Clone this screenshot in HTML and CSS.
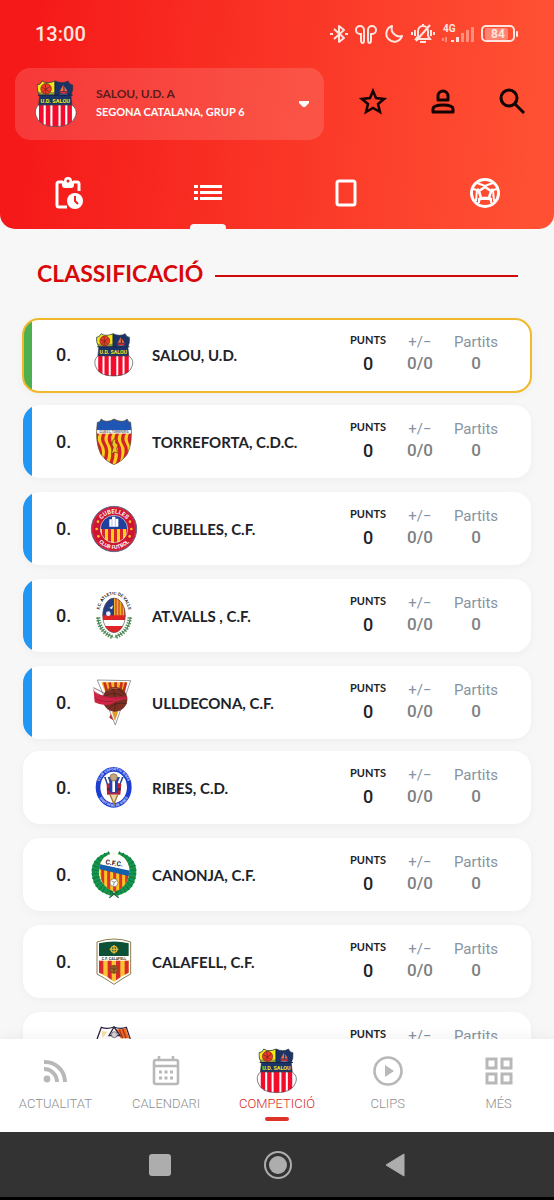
FILE: index.html
```html
<!DOCTYPE html>
<html lang="ca">
<head>
<meta charset="utf-8">
<meta name="viewport" content="width=device-width, initial-scale=1">
<title>Classificació</title>
<link rel="stylesheet" href="styles.css">
</head>
<body>
<svg class="defs" aria-hidden="true">
  <defs>
    <pattern id="stripes" width="18" height="10" patternUnits="userSpaceOnUse"><rect width="18" height="10" fill="#fcd116"/><rect width="9" height="10" fill="#d8232a"/></pattern>
    <clipPath id="salou-top"><path d="M24 20Q33 20 38 9Q52 19 74 9Q96 19 111 9Q115 20 124 20Q126 36 119 50L122 78H28L31 50Q22 36 24 20Z"/></clipPath>
    <clipPath id="salou-low"><path d="M28 76H122Q138 88 133 106Q124 138 76 138Q28 138 20 106Q15 88 28 76Z"/></clipPath>
    <clipPath id="torre"><path d="M22 13Q29 14 34 3Q40 10 50 10Q62 10 72 3Q84 10 96 10Q106 10 111 3Q116 14 122 13Q130 70 112 108Q98 130 72 140Q46 130 32 108Q14 70 22 13Z"/></clipPath>
    <clipPath id="valls"><ellipse cx="72" cy="70" rx="34" ry="52"/></clipPath>
    <clipPath id="canonja"><path d="M28 48Q36 12 72 7Q108 12 118 50Q120 108 72 122Q26 106 28 48Z"/></clipPath>
    <symbol id="salou" viewBox="12 4 130 140">
      <g clip-path="url(#salou-top)"><rect x="18" y="4" width="112" height="76" fill="#1b3468"/><rect x="18" y="4" width="56" height="44" fill="#f4e71b"/><path d="M18 40H74V48H18Z" fill="#9a9e32"/></g>
      <circle cx="49" cy="31" r="15" fill="#ec3b2b" stroke="#6d2217" stroke-width="2"/><path d="M37 27L49 32L60 24M49 32L47 45M40 39L49 32L57 40M46 17L49 32" stroke="#6d2217" stroke-width="2" fill="none"/>
      <path d="M98 19V37H88ZM101 24L109 37H101Z" fill="#ee6d3a"/><path d="M86 39H112L105 45H92Z" fill="#d42b2b"/><path d="M86 48Q98 44 111 48" stroke="#77a9d8" stroke-width="2" fill="none"/>
      <path d="M74 10V48M26 49H124" stroke="#172248" stroke-width="3"/>
      <path d="M24 20Q33 20 38 9Q52 19 74 9Q96 19 111 9Q115 20 124 20Q126 36 119 50L122 78H28L31 50Q22 36 24 20Z" fill="none" stroke="#27313a" stroke-width="2"/>
      <text x="75" y="70" text-anchor="middle" class="crest-bold" font-size="16" fill="#f4e71b">U.D. SALOU</text>
      <g clip-path="url(#salou-low)"><rect x="16" y="76" width="120" height="64" fill="#fff"/><path d="M29 76H42V140H29ZM48 76H61V140H48ZM67 76H84V140H67ZM90 76H103V140H90ZM109 76H122V140H109Z" fill="#f40b2c"/></g>
      <path d="M28 77H122Q138 88 133 106Q124 138 76 138Q28 138 20 106Q15 88 28 77Z" fill="none" stroke="#47434a" stroke-width="2"/>
    </symbol>
    <symbol id="crest-torreforta" viewBox="0 0 144 144">
      <g clip-path="url(#torre)"><rect width="144" height="144" fill="#f6d01c"/><path d="M24 44Q12 62 24 80T28 122M44 44Q32 62 44 80T44 130M64 44Q52 62 64 80T62 140M84 44Q72 62 84 80T82 140M104 44Q92 62 104 80T98 140M124 44Q112 62 124 80T116 130" fill="none" stroke="#d3202a" stroke-width="10"/><rect width="144" height="38" fill="#1f56b4"/><rect y="36" width="144" height="11" fill="#f4f4f4"/></g>
      <text x="72" y="45" text-anchor="middle" class="crest-bold" font-size="8" fill="#667">CLUB D.C. TORREFORTA</text>
      <path d="M69 66L78 62L76 74L84 80L80 92L84 106L74 102L64 108L70 88L66 80Z" fill="#f2c41c" stroke="#5b3a1c" stroke-width="2"/>
      <path d="M22 13Q29 14 34 3Q40 10 50 10Q62 10 72 3Q84 10 96 10Q106 10 111 3Q116 14 122 13Q130 70 112 108Q98 130 72 140Q46 130 32 108Q14 70 22 13Z" fill="none" stroke="#5c4a3a" stroke-width="2"/>
    </symbol>
    <symbol id="crest-cubelles" viewBox="0 0 144 144">
      <path id="cub-up" d="M25 72A47 47 0 0 1 119 72" fill="none"/><path id="cub-down" d="M12 72A60 60 0 0 0 132 72" fill="none"/>
      <circle cx="72" cy="72" r="68" fill="#cf1431" stroke="#60708f" stroke-width="3"/><circle cx="72" cy="72" r="64" fill="none" stroke="#e85a66" stroke-width="1"/>
      <circle cx="72" cy="72" r="41" fill="#1f409c"/><path d="M31 72A41 41 0 0 0 113 72Z" fill="url(#stripes)"/><circle cx="72" cy="72" r="41" fill="none" stroke="#f4e7df" stroke-width="2"/>
      <path d="M58 65V43H66V35H76V41H85V65Z" fill="#fff"/><path d="M66 43V65M76 41V65" stroke="#91a5d6" stroke-width="2"/>
      <g fill="#f7c623"><circle cx="24" cy="50" r="4"/><circle cx="20" cy="72" r="4"/><circle cx="25" cy="94" r="4"/><circle cx="120" cy="50" r="4"/><circle cx="124" cy="72" r="4"/><circle cx="119" cy="94" r="4"/></g>
      <g class="crest-bold" fill="#fff" text-anchor="middle"><text font-size="18"><textPath href="#cub-up" startOffset="50%">CUBELLES</textPath></text><text font-size="16"><textPath href="#cub-down" startOffset="50%">CLUB FUTBOL</textPath></text></g>
    </symbol>
    <symbol id="crest-valls" viewBox="0 0 144 144">
      <path id="valls-arc" d="M28 60C36 -10 108 -10 116 60" fill="none"/>
      <text class="crest-bold" font-size="13" fill="#222" text-anchor="middle"><textPath href="#valls-arc" startOffset="50%">F.C. ATLETIC DE VALLS</textPath></text>
      <g clip-path="url(#valls)"><rect width="144" height="144" fill="#fff"/><path d="M36 16H72V72H36Z" fill="#263d84"/><path d="M72 16H108V72H72Z" fill="#f0ae2b"/><path d="M78 16V72M87 16V72M96 16V72M104 16V72" stroke="#c94b27" stroke-width="4"/><path d="M36 70H108V84H36ZM36 102H108V124H36Z" fill="#df2426"/><path d="M48 65A7 7 0 1 1 62 65A7 7 0 1 1 48 65M58 48L70 40L66 52Z" fill="#e8eef8"/></g>
      <ellipse cx="72" cy="70" rx="34" ry="52" fill="none" stroke="#5b4e54" stroke-width="2"/>
      <path d="M23 76Q24 118 70 136M121 76Q120 118 74 136" fill="none" stroke="#397344" stroke-width="3"/><path d="M25 76Q26 116 68 136M119 76Q118 116 76 136" fill="none" stroke="#4d8b57" stroke-width="13" stroke-dasharray="4 4"/>
    </symbol>
    <symbol id="crest-ulldecona" viewBox="0 0 144 144">
      <path d="M22 3L122 5L76 138Z" fill="#fff" stroke="#666" stroke-width="2"/><path d="M34 10H110L76 118Z" fill="#f3b52b"/><path d="M43 10L55 50M59 10L65 50M77 10V50M95 10L88 50M108 10L98 50" stroke="#c82d24" stroke-width="8"/>
      <circle cx="75" cy="61" r="37" fill="#7c3024"/><path d="M43 44Q75 12 106 48M40 54Q75 28 111 62M53 91Q75 67 110 74M65 25Q83 52 73 97" fill="none" stroke="#4a1a15" stroke-width="2"/><path d="M51 36Q65 24 84 29" stroke="#ad563b" stroke-width="3" fill="none"/>
      <path d="M10 26L14 40Q40 60 110 52L112 60Q84 62 62 76Q36 82 14 70Z" fill="#cf2445"/><path d="M13 38Q48 64 110 55M14 58Q42 72 70 66" fill="none" stroke="#911b33" stroke-width="2"/><path d="M10 26L42 42" stroke="#5b3434" stroke-width="2"/>
      <path d="M66 100L84 100L75 126Z" fill="#e29929"/><path d="M62 105L58 116L70 124" fill="#b8273a"/>
    </symbol>
    <symbol id="crest-ribes" viewBox="0 0 144 144">
      <path id="rib-up" d="M26 70A45 51 0 0 1 116 70" fill="none"/><path id="rib-down" d="M20 70A51 58 0 0 0 122 70" fill="none"/>
      <ellipse cx="71" cy="70" rx="47" ry="54" fill="#fff" stroke="#1c3dce" stroke-width="14"/>
      <g class="crest-bold" font-size="11" fill="#cbd6ff" text-anchor="middle"><text><textPath href="#rib-up" startOffset="50%">CLUB ESPORTIU RIBES</textPath></text><text><textPath href="#rib-down" startOffset="50%">SANT PERE DE RIBES</textPath></text></g>
      <path d="M42 39H101L90 66H52Z" fill="#27408e"/><path d="M50 39L58 62M93 39L84 62" stroke="#fff" stroke-width="6"/><path d="M50 60L62 56H82L94 60L91 92H51Z" fill="#b42335"/><path d="M59 42H83V86H59Z" fill="#263fb0"/><path d="M71 45V84" stroke="#fff" stroke-width="8"/><circle cx="71" cy="40" r="11" fill="#c5a77e" stroke="#725c48" stroke-width="2"/><path d="M60 92L72 120L83 92" fill="#e9d9aa" stroke="#a17a31" stroke-width="4"/><path d="M52 76H60M83 76H92" stroke="#37284a" stroke-width="6"/>
    </symbol>
    <symbol id="crest-canonja" viewBox="0 0 144 144">
      <path d="M60 12Q6 28 18 80Q26 116 70 124M84 12Q138 28 126 80Q118 116 74 124" fill="none" stroke="#15964f" stroke-width="21"/><path d="M60 12Q6 28 18 80Q26 116 70 124M84 12Q138 28 126 80Q118 116 74 124" fill="none" stroke="#0f7a40" stroke-width="23" stroke-dasharray="3 8"/>
      <path d="M86 118L58 140M58 118L86 140" stroke="#24623b" stroke-width="4"/>
      <g clip-path="url(#canonja)"><rect width="144" height="144" fill="#f9c522"/><path d="M38 40V130M56 40V130M74 40V130M92 40V130M110 40V130" stroke="#d93430" stroke-width="9"/><path d="M0 0H144V66L28 40Z" fill="#fff"/><path d="M22 38L122 60V77L22 53Z" fill="#1460ad"/></g>
      <text x="72" y="43" text-anchor="middle" class="crest-bold" font-size="20" fill="#111" transform="rotate(9 72 40)">C.F.C.</text>
      <circle cx="72" cy="95" r="12" fill="#fff" stroke="#765" stroke-width="2"/><path d="M65 90L73 94L80 89M73 94L70 104" fill="none" stroke="#555" stroke-width="2"/>
    </symbol>
    <symbol id="crest-calafell" viewBox="0 0 144 144">
      <path d="M21 12Q46 3 72 3Q98 3 122 12V108Q102 118 72 139Q40 118 21 108Z" fill="#fff" stroke="#8b7b4d" stroke-width="3"/><path d="M27 16Q72 5 116 16V54H27Z" fill="#0c5135"/>
      <path d="M27 68H116V104Q94 114 72 131Q50 114 27 104Z" fill="#f8c52e"/><path d="M27 68H40V109L27 104ZM53 68H65V126L53 117ZM78 68H91V118L78 127ZM104 68H116V104L104 110Z" fill="#d9282e"/>
      <circle cx="72" cy="34" r="9" fill="none" stroke="#e0b83c" stroke-width="4"/><path d="M72 21V47M59 34H85" stroke="#e0b83c" stroke-width="4"/><circle cx="72" cy="94" r="12" fill="#9c6422" stroke="#6b431a" stroke-width="2"/><path d="M62 90Q72 98 82 90M72 82V106" fill="none" stroke="#5c3a18" stroke-width="2"/>
      <text x="72" y="65" text-anchor="middle" class="crest-bold" font-size="11" fill="#2c3b33">C.F. CALAFELL</text>
    </symbol>
    <symbol id="crest-next" viewBox="0 0 144 144">
      <path d="M22 40L34 7Q52 14 72 6Q90 14 109 7L120 40V90Q98 128 72 138Q46 128 22 90Z" fill="#fff" stroke="#2f2540" stroke-width="4"/><path d="M76 12Q92 14 107 9L118 40H92Z" fill="#f36b24"/><path d="M88 14L98 40M98 13L108 40" stroke="#a7351f" stroke-width="4"/><path d="M72 6L57 32H90Z" fill="#fff" stroke="#2f2540" stroke-width="4"/><path d="M35 18L52 20L38 38Z" fill="#f6dda1"/><circle cx="73" cy="29" r="9" fill="#d5d2d8" stroke="#50405b" stroke-width="2"/>
    </symbol>
  </defs>
</svg>

<div class="app">
  <header class="top">
    <div class="status">
      <time class="clock">13:00</time>
      <div class="status-icons">
        <svg width="18" height="20" viewBox="0 0 18 20" fill="none" stroke="currentColor" stroke-width="2" stroke-linejoin="round" aria-hidden="true"><path d="M4 5L14 14L9 18V2L14 6L4 15"/><path d="M0 10H3M15 10H18"/></svg>
        <svg width="22" height="20" viewBox="0 0 22 20" fill="none" stroke="currentColor" stroke-width="2" aria-hidden="true"><path d="M6 10H5A4 4 0 1 1 9 6V16A1 2 0 0 1 6 16ZM16 10H17A4 4 0 1 0 13 6V16A1 2 0 0 0 16 16Z"/></svg>
        <svg width="20" height="20" viewBox="0 0 20 20" fill="none" stroke="currentColor" stroke-width="2" stroke-linejoin="round" aria-hidden="true"><path d="M8 2A8 8 0 1 0 18 12A8 8 0 0 1 8 2Z"/></svg>
        <svg width="24" height="20" viewBox="0 0 24 20" fill="none" stroke="currentColor" stroke-width="2" aria-hidden="true"><path d="M5 15H19L17 12V7A5 5 0 0 0 7 7V12ZM12 0V3M9 18H15M19 1L5 17M1 8V11M4 6V12M20 6V12M23 8V11"/></svg>
        <svg width="32" height="20" viewBox="0 0 32 20" fill="currentColor" aria-hidden="true"><text x="1" y="8" class="crest-bold" font-size="10">4G</text><path d="M9 16H12V18H9ZM14 13H17V18H14Z"/><path opacity=".45" d="M19 9H22V18H19ZM24 6H27V18H24ZM29 3H32V18H29ZM0 14H2V17H0ZM3 13H5V18H3Z"/></svg>
        <svg width="38" height="18" viewBox="0 0 38 18" aria-hidden="true"><rect x="4" y="3" width="23" height="12" rx="2" fill="#ff8472"/><rect x="1" y="1" width="32" height="15" rx="4" fill="none" stroke="currentColor" stroke-width="2"/><rect x="35" y="6" width="2" height="6" rx="1" fill="currentColor"/><text x="17" y="13" text-anchor="middle" class="crest-bold" font-size="12" fill="currentColor">84</text></svg>
      </div>
    </div>
    <div class="toolbar">
      <button class="team-picker" type="button">
        <svg class="crest-lg" aria-hidden="true"><use href="#salou"/></svg>
        <span class="team-text"><span class="team-name">SALOU, U.D. A</span><span class="team-group">SEGONA CATALANA, GRUP 6</span></span>
        <svg width="12" height="8" viewBox="0 0 12 8" fill="#fff" aria-hidden="true"><path d="M1 1H11L11 3L7 7H5L1 3Z"/></svg>
      </button>
      <div class="actions">
        <button type="button" aria-label="Preferits"><svg width="28" height="28" viewBox="0 0 28 28" fill="none" stroke="#130303" stroke-width="2.500" aria-hidden="true"><path d="M14 4L17 11L25 12L19 17L21 25L14 21L7 25L9 17L3 12L11 11Z"/></svg></button>
        <button type="button" aria-label="Perfil"><svg width="28" height="28" viewBox="0 0 28 28" fill="none" stroke="#130303" stroke-width="3" stroke-linejoin="round" aria-hidden="true"><path d="M9 13V9A5 5 0 0 1 19 9V13Z"/><path d="M4 25V22Q4 18 14 18T24 22V25Z"/></svg></button>
        <button type="button" aria-label="Cerca"><svg width="28" height="28" viewBox="0 0 28 28" fill="none" stroke="#130303" stroke-width="3" aria-hidden="true"><circle cx="11" cy="11" r="8"/><path d="M16 16L26 26"/></svg></button>
      </div>
    </div>
    <nav class="tabs" aria-label="Seccions">
      <a href="#partits" aria-label="Partits"><svg width="30" height="34" viewBox="0 0 30 34" aria-hidden="true"><path d="M9 6H5Q3 6 3 8V29Q3 31 5 31H13M19 6H23Q25 6 25 8V15" fill="none" stroke="#fff" stroke-width="3"/><path d="M8 5H10A4 4 0 0 1 18 5H20V9Q20 12 17 12H11Q8 12 8 9Z" fill="#fff"/><circle cx="14" cy="5" r="1.500" fill="#f52020"/><circle cx="21" cy="25" r="8" fill="#fff"/><path d="M21 20V25L24 28" fill="none" stroke="#f52020" stroke-width="2"/></svg></a>
      <a href="#classificacio" class="active" aria-label="Classificació"><svg width="28" height="18" viewBox="0 0 28 18" fill="#fff" aria-hidden="true"><path d="M0 1H4V4H0ZM6 1H28V4H6ZM0 7H4V10H0ZM6 7H28V10H6ZM0 13H4V16H0ZM6 13H28V16H6Z"/></svg></a>
      <a href="#targetes" aria-label="Targetes"><svg width="22" height="28" viewBox="0 0 22 28" fill="none" stroke="#fff" stroke-width="3" aria-hidden="true"><rect x="2" y="2" width="18" height="24" rx="2"/></svg></a>
      <a href="#gols" aria-label="Gols"><svg width="32" height="32" viewBox="0 0 32 32" fill="none" stroke="#fff" aria-hidden="true"><circle cx="16" cy="16" r="13.500" stroke-width="3"/><path d="M16 10L22 14L20 21H12L10 14Z" stroke-width="2.600"/><path d="M16 8V10M24 12L22 14M22 23L20 21M10 23L12 21M8 12L10 14" stroke-width="3"/><path d="M8 6L16 9L24 6M28 12L24 13L25 24M4 12L8 13L7 24M10 26V22H22V26" stroke-width="2"/></svg></a>
    </nav>
  </header>

  <main class="content">
    <h1 class="title">CLASSIFICACIÓ</h1>
    <div class="groups">
      <ol class="group">
        <li class="row leader"><span class="pos">0.</span><svg class="crest crest-salou" aria-hidden="true"><use href="#salou"/></svg><span class="name">SALOU, U.D.</span><dl class="stats"><div class="points"><dt>PUNTS</dt><dd>0</dd></div><div><dt>+/−</dt><dd>0/0</dd></div><div><dt>Partits</dt><dd>0</dd></div></dl></li>
      </ol>
      <ol class="group promotion">
        <li class="row"><span class="pos">0.</span><svg class="crest" aria-hidden="true"><use href="#crest-torreforta"/></svg><span class="name">TORREFORTA, C.D.C.</span><dl class="stats"><div class="points"><dt>PUNTS</dt><dd>0</dd></div><div><dt>+/−</dt><dd>0/0</dd></div><div><dt>Partits</dt><dd>0</dd></div></dl></li>
        <li class="row"><span class="pos">0.</span><svg class="crest" aria-hidden="true"><use href="#crest-cubelles"/></svg><span class="name">CUBELLES, C.F.</span><dl class="stats"><div class="points"><dt>PUNTS</dt><dd>0</dd></div><div><dt>+/−</dt><dd>0/0</dd></div><div><dt>Partits</dt><dd>0</dd></div></dl></li>
        <li class="row"><span class="pos">0.</span><svg class="crest" aria-hidden="true"><use href="#crest-valls"/></svg><span class="name">AT.VALLS , C.F.</span><dl class="stats"><div class="points"><dt>PUNTS</dt><dd>0</dd></div><div><dt>+/−</dt><dd>0/0</dd></div><div><dt>Partits</dt><dd>0</dd></div></dl></li>
        <li class="row"><span class="pos">0.</span><svg class="crest" aria-hidden="true"><use href="#crest-ulldecona"/></svg><span class="name">ULLDECONA, C.F.</span><dl class="stats"><div class="points"><dt>PUNTS</dt><dd>0</dd></div><div><dt>+/−</dt><dd>0/0</dd></div><div><dt>Partits</dt><dd>0</dd></div></dl></li>
      </ol>
      <ol class="group">
        <li class="row"><span class="pos">0.</span><svg class="crest" aria-hidden="true"><use href="#crest-ribes"/></svg><span class="name">RIBES, C.D.</span><dl class="stats"><div class="points"><dt>PUNTS</dt><dd>0</dd></div><div><dt>+/−</dt><dd>0/0</dd></div><div><dt>Partits</dt><dd>0</dd></div></dl></li>
        <li class="row"><span class="pos">0.</span><svg class="crest" aria-hidden="true"><use href="#crest-canonja"/></svg><span class="name">CANONJA, C.F.</span><dl class="stats"><div class="points"><dt>PUNTS</dt><dd>0</dd></div><div><dt>+/−</dt><dd>0/0</dd></div><div><dt>Partits</dt><dd>0</dd></div></dl></li>
        <li class="row"><span class="pos">0.</span><svg class="crest" aria-hidden="true"><use href="#crest-calafell"/></svg><span class="name">CALAFELL, C.F.</span><dl class="stats"><div class="points"><dt>PUNTS</dt><dd>0</dd></div><div><dt>+/−</dt><dd>0/0</dd></div><div><dt>Partits</dt><dd>0</dd></div></dl></li>
        <li class="row"><span class="pos"></span><svg class="crest" aria-hidden="true"><use href="#crest-next"/></svg><span class="name"></span><dl class="stats"><div class="points"><dt>PUNTS</dt><dd></dd></div><div><dt>+/−</dt><dd></dd></div><div><dt>Partits</dt><dd></dd></div></dl></li>
      </ol>
    </div>
  </main>

  <nav class="bottom" aria-label="Principal">
    <a href="#actualitat"><span class="nav-icon"><svg width="24" height="24" viewBox="0 0 24 24" fill="none" stroke="currentColor" stroke-width="4" aria-hidden="true"><circle cx="4" cy="20" r="3.400" fill="currentColor" stroke="none"/><path d="M1 10A13 13 0 0 1 14 23M1 3A20 20 0 0 1 22 23"/></svg></span><span>ACTUALITAT</span></a>
    <a href="#calendari"><span class="nav-icon"><svg width="28" height="30" viewBox="0 0 28 30" fill="none" stroke="currentColor" stroke-width="2.600" aria-hidden="true"><rect x="2" y="4" width="24" height="24" rx="2"/><path d="M2 10H26M7 0V4M21 0V4"/><path d="M7 16H10M12.500 16H15.500M18 16H21M7 22H10M12.500 22H15.500M18 22H21" stroke-width="3"/></svg></span><span>CALENDARI</span></a>
    <a href="#competicio" class="current" aria-current="page"><span class="nav-icon"><svg class="crest-nav" aria-hidden="true"><use href="#salou"/></svg></span><span>COMPETICIÓ</span></a>
    <a href="#clips"><span class="nav-icon"><svg width="30" height="30" viewBox="0 0 30 30" aria-hidden="true"><circle cx="15" cy="15" r="13.500" fill="none" stroke="currentColor" stroke-width="2.600"/><path d="M12 9L21 15L12 21Z" fill="currentColor"/></svg></span><span>CLIPS</span></a>
    <a href="#mes"><span class="nav-icon"><svg width="28" height="28" viewBox="0 0 28 28" fill="none" stroke="currentColor" stroke-width="3" aria-hidden="true"><path d="M2 2H11V11H2ZM17 2H26V11H17ZM2 17H11V26H2ZM17 17H26V26H17Z"/></svg></span><span>MÉS</span></a>
  </nav>

  <div class="system">
    <button type="button" aria-label="Recents"><svg width="22" height="22" viewBox="0 0 22 22" fill="#adadad" aria-hidden="true"><rect width="22" height="22" rx="3"/></svg></button>
    <button type="button" aria-label="Inici"><svg width="30" height="30" viewBox="0 0 30 30" fill="#adadad" aria-hidden="true"><circle cx="15" cy="15" r="13" fill="none" stroke="#adadad" stroke-width="2"/><circle cx="15" cy="15" r="9"/></svg></button>
    <button type="button" aria-label="Enrere"><svg width="20" height="24" viewBox="0 0 20 24" fill="#adadad" stroke="#adadad" stroke-linejoin="round" aria-hidden="true"><path d="M1 12L19 1V23Z"/></svg></button>
  </div>
</div>
</body>
</html>
```
FILE: styles.css
```css
* {
  box-sizing: border-box;
}

body {
  margin: 0;
  background: #f7f7f7;
  color: #1d2329;
  font-family: Roboto, sans-serif;
}

button {
  display: flex;
  align-items: center;
  justify-content: center;
  padding: 0;
  border: 0;
  background: none;
  color: inherit;
  font: inherit;
}

a {
  color: inherit;
  text-decoration: none;
}

.defs {
  position: absolute;
  width: 0;
  height: 0;
}

.crest-bold {
  font-family: Roboto, sans-serif;
  font-weight: 700;
}

.app {
  display: flex;
  flex-direction: column;
  height: 100vh;
}

.top {
  flex: none;
  border-radius: 0 0 15px 15px;
  background: linear-gradient(95deg, #f51919 5%, #ff5033 95%);
}

.status {
  display: flex;
  align-items: center;
  justify-content: space-between;
  height: 68px;
  padding: 0 35px;
  color: #ffe5df;
}

.clock {
  font-size: 20px;
  font-weight: 500;
}

.status-icons {
  display: flex;
  align-items: center;
  gap: 7px;
}

.toolbar {
  display: flex;
  align-items: center;
  padding-left: 15px;
}

.team-picker {
  flex: 0 1 309px;
  justify-content: flex-start;
  height: 72px;
  padding: 0 14px 0 18px;
  border-radius: 15px;
  background: rgb(255 255 255 / 14%);
  text-align: left;
}

.crest-lg {
  flex: none;
  width: 46px;
  height: 50px;
}

.team-text {
  display: flex;
  flex: 1;
  flex-direction: column;
  padding: 0 0 2px 17px;
  font-family: Lato, sans-serif;
  font-weight: 700;
  line-height: 18px;
}

.team-name {
  color: #5b1d20;
  font-size: 12px;
}

.team-group {
  color: #fff;
  font-size: 11px;
}

.actions {
  display: flex;
  flex: 1;
  justify-content: space-between;
  padding: 0 28px 6px 35px;
}

.tabs {
  display: grid;
  grid-template-columns: repeat(4, 1fr);
  height: 89px;
}

.tabs a {
  position: relative;
  display: flex;
  align-items: center;
  justify-content: center;
  padding-top: 16px;
}

.tabs .active::after {
  content: "";
  position: absolute;
  bottom: 0;
  width: 36px;
  height: 5px;
  border-radius: 4px 4px 0 0;
  background: #f7f7f7;
}

.content {
  flex: 1;
  min-height: 0;
  overflow: hidden;
  padding: 24px 23px 0;
}

.title {
  display: flex;
  align-items: center;
  gap: 12px;
  margin: 0 13px 25px 14px;
  color: #d90808;
  font-family: Lato, sans-serif;
  font-weight: 700;
  font-size: 23px;
  line-height: 40px;
}

.title::after {
  content: "";
  flex: 1;
  height: 2px;
  margin-top: 6px;
  background: #cf0a0a;
}

.groups {
  display: flex;
  flex-direction: column;
  gap: 12px;
}

.group {
  display: flex;
  flex-direction: column;
  gap: 14px;
  margin: 0;
  padding: 0;
  list-style: none;
}

.row {
  display: flex;
  align-items: center;
  height: 73px;
  padding: 0 25px 0 33px;
  border-radius: 17px;
  background: #fff;
  box-shadow: 0 2px 10px rgb(0 0 0 / 4%);
}

.leader {
  height: 75px;
  margin: 0 -1px;
  padding: 0 24px 2px 32px;
  border: 2px solid #efb92b;
  background: linear-gradient(90deg, #4caf50 8px, #fff 8px);
}

.promotion .row {
  background: linear-gradient(90deg, #2196f3 9px, #fff 9px);
}

.pos {
  width: 34px;
  font-size: 18px;
  font-weight: 500;
}

.crest {
  flex: none;
  width: 48px;
  height: 48px;
}

.crest-salou {
  padding: 1px;
}

.name {
  flex: 1;
  padding-left: 14px;
  font-family: Lato, sans-serif;
  font-weight: 700;
  font-size: 15px;
}

.stats {
  display: grid;
  grid-template-columns: 52px 52px 60px;
  align-items: center;
  margin: 0;
  padding-bottom: 4px;
  text-align: center;
}

.stats dt {
  color: #8793a2;
  font-size: 15px;
  line-height: 20px;
}

.stats dd {
  min-height: 22px;
  margin: 0;
  color: #808080;
  font-size: 17px;
  font-weight: 500;
  line-height: 22px;
}

.stats .points dt {
  color: #1d2329;
  font-family: Lato, sans-serif;
  font-weight: 700;
  font-size: 11px;
  line-height: 22px;
}

.stats .points dd {
  min-height: 26px;
  color: #1d2329;
  font-size: 18px;
  line-height: 26px;
}

.bottom {
  display: grid;
  flex: none;
  grid-template-columns: repeat(5, 1fr);
  height: 93px;
  background: #fff;
  box-shadow: 0 -2px 12px rgb(0 0 0 / 5%);
  color: #8f8f8f;
  font-size: 13px;
  font-weight: 300;
}

.bottom a {
  display: flex;
  flex-direction: column;
  align-items: center;
  padding-top: 8px;
  line-height: 18px;
}

.nav-icon {
  display: flex;
  align-items: center;
  justify-content: center;
  height: 48px;
  color: #b8b8b8;
}

.crest-nav {
  width: 44px;
  height: 48px;
}

.bottom .current {
  color: #d9281e;
}

.bottom .current::after {
  content: "";
  width: 24px;
  height: 4px;
  margin-top: 4px;
  border-radius: 2px;
  background: #dc342b;
}

.system {
  display: flex;
  flex: none;
  align-items: center;
  justify-content: center;
  gap: 92px;
  height: 68px;
  border-bottom: 3px solid #000;
  background: #333;
}
```
